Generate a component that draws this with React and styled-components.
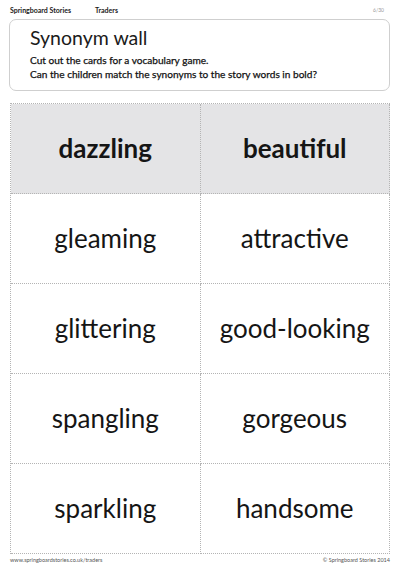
import styled, { createGlobalStyle } from "styled-components";

const GlobalStyle = createGlobalStyle`
  html, body {
    margin: 0;
    padding: 0;
    background: #ffffff;
  }
  body {
    font-family: Lato, "Open Sans", "Liberation Sans", sans-serif;
    color: #1b1b1b;
  }
`;

const Page = styled.div`
  width: 400px;
  height: 566px;
  padding: 0 10px;
  box-sizing: border-box;
  display: flex;
  flex-direction: column;
`;

const TopBar = styled.div`
  height: 19px;
  display: flex;
  align-items: center;
  font-size: 7px;
  font-weight: 700;
`;

const TopItem = styled.span`
  width: ${(p) => p.width || "auto"};
`;

const PageNo = styled.span`
  margin-left: auto;
  margin-right: 6px;
  color: #999;
  font-weight: 400;
  font-size: 5px;
`;

const Intro = styled.div`
  margin: 0 0 0 -1px;
  height: 72px;
  box-sizing: border-box;
  border: 1px solid #cfcfcf;
  border-radius: 7px;
  padding: 5px 20px 0;
`;

const Title = styled.h1`
  margin: 0;
  font-size: 19.5px;
  font-weight: 400;
  line-height: 26px;
`;

const Lead = styled.p`
  margin: 2px 0 0;
  font-size: 10.1px;
  font-weight: 400;
  line-height: 14px;
  color: #111;
  -webkit-text-stroke: 0.25px #111;
`;

const Wall = styled.div`
  margin-top: 12px;
  display: grid;
  grid-template-columns: 1fr 1fr;
  grid-auto-rows: 90px;
  border-top: 1px dotted #b4b4b4;
  border-left: 1px dotted #b4b4b4;
`;

const Card = styled.div`
  display: flex;
  align-items: center;
  justify-content: center;
  border-right: 1px dotted #b4b4b4;
  border-bottom: 1px dotted #b4b4b4;
  background: ${(p) => (p.$head ? "#e4e4e6" : "#ffffff")};
  font-size: 26px;
  font-weight: ${(p) => (p.$head ? 700 : 400)};
  color: #151515;
  padding-bottom: 2px;
`;

const Footer = styled.div`
  display: flex;
  justify-content: space-between;
  margin-top: 3px;
  font-size: 5.5px;
  color: #555;
`;

const words = [
  ["dazzling", "beautiful"],
  ["gleaming", "attractive"],
  ["glittering", "good-looking"],
  ["spangling", "gorgeous"],
  ["sparkling", "handsome"],
];

export default function App() {
  return (
    <>
      <GlobalStyle />
      <Page>
        <TopBar>
          <TopItem width="85px">Springboard Stories</TopItem>
          <TopItem>Traders</TopItem>
          <PageNo>6/30</PageNo>
        </TopBar>
        <Intro>
          <Title>Synonym wall</Title>
          <Lead>
            Cut out the cards for a vocabulary game.
            <br />
            Can the children match the synonyms to the story words in bold?
          </Lead>
        </Intro>
        <Wall>
          {words.map((row, i) =>
            row.map((w) => (
              <Card key={w} $head={i === 0}>
                {w}
              </Card>
            ))
          )}
        </Wall>
        <Footer>
          <span>www.springboardstories.co.uk/traders</span>
          <span>© Springboard Stories 2014</span>
        </Footer>
      </Page>
    </>
  );
}
